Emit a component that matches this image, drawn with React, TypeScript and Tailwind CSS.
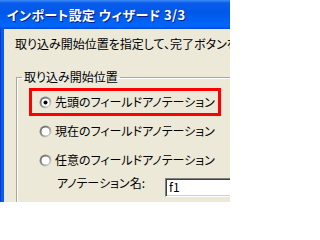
import React from "react";

const font = "font-['Noto_Sans_CJK_JP','Noto_Sans',sans-serif] [font-feature-settings:'palt']";

const Radio = ({ checked = false }: { checked?: boolean }) => (
  <svg width="13" height="13" viewBox="0 0 13 13" className="shrink-0">
    <defs>
      <linearGradient id="rim" x1="0" y1="0" x2="1" y2="1">
        <stop offset="0" stopColor="#808080" />
        <stop offset="0.55" stopColor="#9a9a9a" />
        <stop offset="1" stopColor="#ffffff" />
      </linearGradient>
      <linearGradient id="rim2" x1="0" y1="0" x2="1" y2="1">
        <stop offset="0" stopColor="#404040" />
        <stop offset="0.6" stopColor="#9a9a9a" />
        <stop offset="1" stopColor="#e4e1d4" />
      </linearGradient>
    </defs>
    <circle cx="6.5" cy="6.5" r="6" fill="url(#rim)" />
    <circle cx="6.5" cy="6.5" r="5" fill="url(#rim2)" />
    <circle cx="6.5" cy="6.5" r="4" fill="#ffffff" />
    {checked && <circle cx="6.5" cy="6.5" r="2" fill="#000000" />}
  </svg>
);

const Option = ({ label, checked }: { label: string; checked?: boolean }) => (
  <div className="flex items-center gap-[3px] h-[16px]">
    <Radio checked={checked} />
    <span className="text-[12px] leading-[16px] text-black whitespace-nowrap">{label}</span>
  </div>
);

export default function App() {
  return (
    <div className={`w-[230px] h-[202px] overflow-hidden bg-[#ECE9D8] flex flex-col ${font}`}>
      <div className="h-[29px] shrink-0 flex items-center pl-[7px] bg-[linear-gradient(to_bottom,#3D8DF5_0px,#0A5CEB_3px,#0058E8_12px,#0062F6_22px,#0068FA_26px,#0048D8_29px)]">
        <span className="text-white font-bold text-[13px] leading-[16px] tracking-[0.4px] whitespace-nowrap [text-shadow:1px_1px_0_#0A1E80]">
          インポート設定 ウィザード 3/3
        </span>
      </div>

      <div className="flex flex-1 min-h-0">
        <div className="w-[4px] shrink-0 bg-[#0A5BF0] border-l border-l-[#0040C8]" />

        <div className="flex-1 min-w-0 overflow-hidden">
          <p className="pl-[11px] pt-[7px] text-[12px] leading-[16px] text-black whitespace-nowrap">
            取り込み開始位置を指定して、完了ボタンを押してください。
          </p>

          <fieldset className="ml-[12px] mt-[17px] w-[260px] h-[200px] border-t border-l border-[#ACA899] shadow-[inset_1px_1px_0_#ffffff]">
            <legend className="ml-[5px] px-[2px] text-[12px] leading-[16px] text-black whitespace-nowrap">
              取り込み開始位置
            </legend>

            <div className="ml-[12px] mt-[3px] w-[192px] h-[28px] border-[3px] border-[#FF0000] flex items-center pl-[7px]">
              <Option label="先頭のフィールドアノテーション" checked />
            </div>

            <div className="ml-[22px] mt-[7px] flex flex-col gap-[13px]">
              <Option label="現在のフィールドアノテーション" />
              <Option label="任意のフィールドアノテーション" />
            </div>

            <div className="ml-[40px] mt-[7px] flex items-start">
              <span className="w-[108px] text-[12px] leading-[16px] text-black whitespace-nowrap">
                アノテーション名:
              </span>
              <div className="mt-[3px] w-[80px] h-[19px] bg-white border border-[#808080] border-r-white border-b-white shadow-[inset_1px_1px_0_#404040,inset_-1px_-1px_0_#D4D0C8] pl-[3px] text-[12px] leading-[16px] text-black">
                f1
              </div>
            </div>
          </fieldset>
        </div>
      </div>
    </div>
  );
}
